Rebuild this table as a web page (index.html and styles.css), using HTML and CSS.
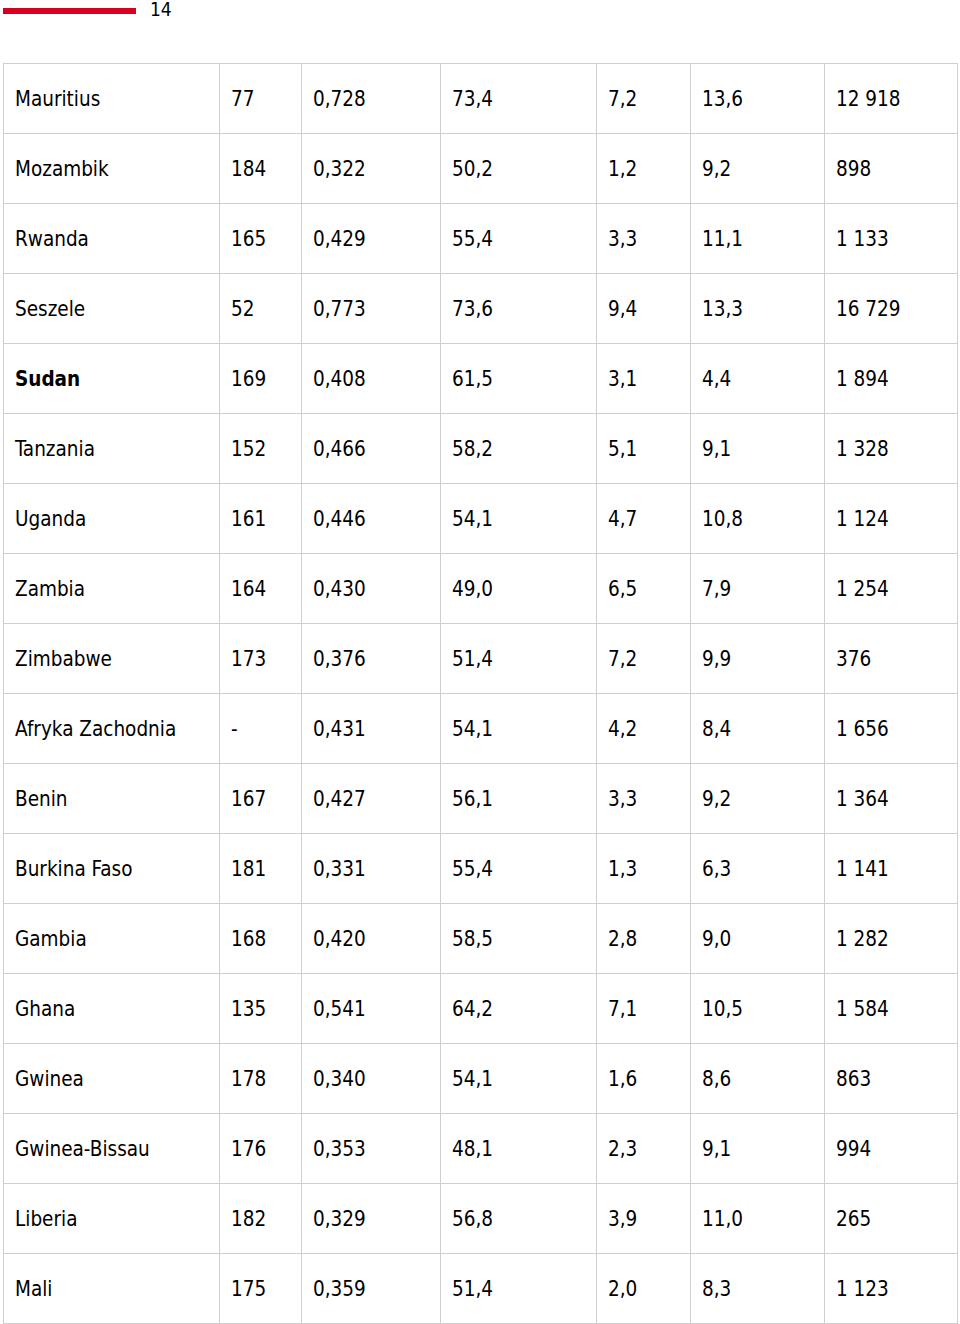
FILE: index.html
```html
<!DOCTYPE html>
<html>
<head>
<meta charset="utf-8">
<link rel="stylesheet" href="styles.css">
</head>
<body>
<div class="header">
  <div class="bar"></div>
  <div class="page-num">14</div>
</div>
<table class="data">
  <colgroup>
    <col class="c1"><col class="c2"><col class="c3"><col class="c4"><col class="c5"><col class="c6"><col class="c7">
  </colgroup>
  <tbody>
    <tr><td>Mauritius</td><td>77</td><td>0,728</td><td>73,4</td><td>7,2</td><td>13,6</td><td>12 918</td></tr>
    <tr><td>Mozambik</td><td>184</td><td>0,322</td><td>50,2</td><td>1,2</td><td>9,2</td><td>898</td></tr>
    <tr><td>Rwanda</td><td>165</td><td>0,429</td><td>55,4</td><td>3,3</td><td>11,1</td><td>1 133</td></tr>
    <tr><td>Seszele</td><td>52</td><td>0,773</td><td>73,6</td><td>9,4</td><td>13,3</td><td>16 729</td></tr>
    <tr><td class="bold">Sudan</td><td>169</td><td>0,408</td><td>61,5</td><td>3,1</td><td>4,4</td><td>1 894</td></tr>
    <tr><td>Tanzania</td><td>152</td><td>0,466</td><td>58,2</td><td>5,1</td><td>9,1</td><td>1 328</td></tr>
    <tr><td>Uganda</td><td>161</td><td>0,446</td><td>54,1</td><td>4,7</td><td>10,8</td><td>1 124</td></tr>
    <tr><td>Zambia</td><td>164</td><td>0,430</td><td>49,0</td><td>6,5</td><td>7,9</td><td>1 254</td></tr>
    <tr><td>Zimbabwe</td><td>173</td><td>0,376</td><td>51,4</td><td>7,2</td><td>9,9</td><td>376</td></tr>
    <tr><td>Afryka Zachodnia</td><td>-</td><td>0,431</td><td>54,1</td><td>4,2</td><td>8,4</td><td>1 656</td></tr>
    <tr><td>Benin</td><td>167</td><td>0,427</td><td>56,1</td><td>3,3</td><td>9,2</td><td>1 364</td></tr>
    <tr><td>Burkina Faso</td><td>181</td><td>0,331</td><td>55,4</td><td>1,3</td><td>6,3</td><td>1 141</td></tr>
    <tr><td>Gambia</td><td>168</td><td>0,420</td><td>58,5</td><td>2,8</td><td>9,0</td><td>1 282</td></tr>
    <tr><td>Ghana</td><td>135</td><td>0,541</td><td>64,2</td><td>7,1</td><td>10,5</td><td>1 584</td></tr>
    <tr><td>Gwinea</td><td>178</td><td>0,340</td><td>54,1</td><td>1,6</td><td>8,6</td><td>863</td></tr>
    <tr><td>Gwinea-Bissau</td><td>176</td><td>0,353</td><td>48,1</td><td>2,3</td><td>9,1</td><td>994</td></tr>
    <tr><td>Liberia</td><td>182</td><td>0,329</td><td>56,8</td><td>3,9</td><td>11,0</td><td>265</td></tr>
    <tr><td>Mali</td><td>175</td><td>0,359</td><td>51,4</td><td>2,0</td><td>8,3</td><td>1 123</td></tr>
  </tbody>
</table>
</body>
</html>
```
FILE: styles.css
```css
html, body {
  margin: 0;
  padding: 0;
  background: #ffffff;
}
body {
  font-family: "DejaVu Sans Condensed", "DejaVu Sans", sans-serif;
  font-stretch: condensed;
  color: #000000;
}
.header {
  display: flex;
  align-items: flex-start;
  height: 63px;
  padding-left: 3px;
}
.bar {
  width: 133px;
  height: 6px;
  margin-top: 8px;
  background: #d7001e;
}
.page-num {
  margin-left: 14px;
  font-size: 19px;
  line-height: 20px;
  margin-top: -1px;
}
.data {
  margin-left: 3px;
  border-collapse: collapse;
  table-layout: fixed;
  width: 954px;
  font-size: 20.5px;
}
.data td {
  border: 1px solid #cfcfcf;
  height: 70px;
  box-sizing: border-box;
  padding: 0 0 0 11px;
  vertical-align: middle;
  white-space: nowrap;
}
.bold {
  font-weight: bold;
}
.c1 { width: 216px; }
.c2 { width: 82px; }
.c3 { width: 139px; }
.c4 { width: 156px; }
.c5 { width: 94px; }
.c6 { width: 134px; }
.c7 { width: 133px; }
```
